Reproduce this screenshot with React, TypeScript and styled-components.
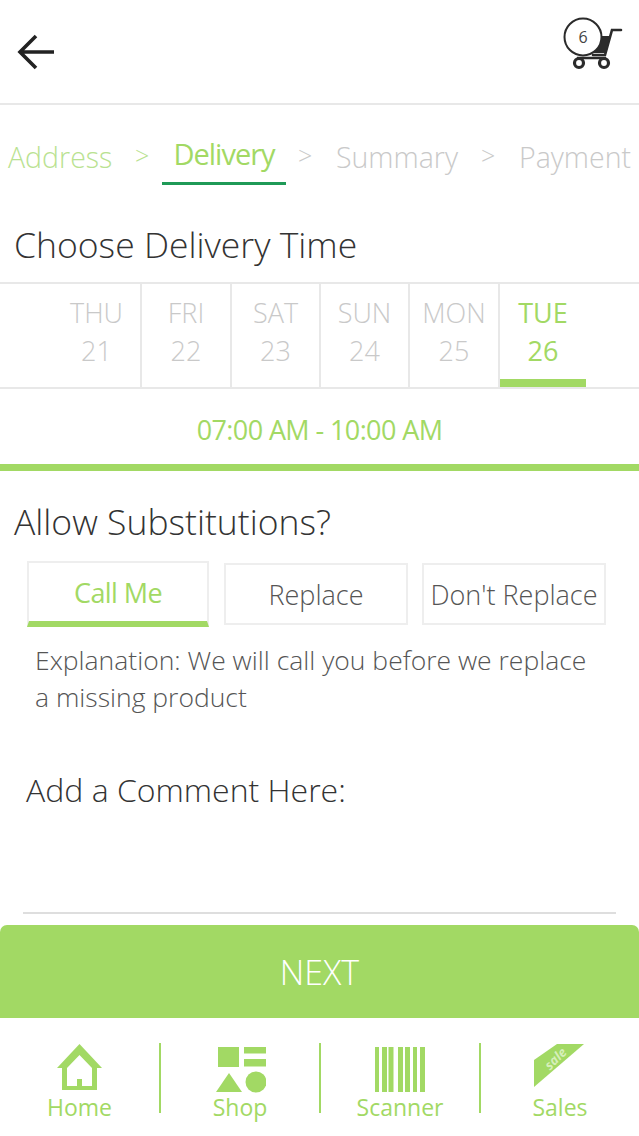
import React from "react";
import styled, { createGlobalStyle } from "styled-components";

const GREEN = "#a2d964";
const GREY = "#c9c9c9";
const LINE = "#e8e8e8";

const Global = createGlobalStyle`
  html, body { margin: 0; padding: 0; background: #fff; }
  * { box-sizing: border-box; }
  body { font-family: "Open Sans", "Liberation Sans", sans-serif; font-weight: 300; }
`;

const Page = styled.div`
  width: 639px;
  height: 1136px;
  display: flex;
  flex-direction: column;
  overflow: hidden;
  background: #fff;
`;
const Header = styled.header`
  height: 105px;
  flex: none;
  border-bottom: 2px solid ${LINE};
  display: flex;
  justify-content: space-between;
  padding: 17px 16px 0 17px;
`;
const BackIcon = styled.svg`
  width: 38px;
  height: 38px;
  margin-top: 16px;
`;
const CartIcon = styled.svg`
  width: 60px;
  height: 54px;
`;
const Steps = styled.nav`
  height: 80px;
  flex: none;
  display: flex;
  align-items: flex-start;
  padding-left: 8px;
  font-size: 28.5px;
  line-height: 40px;
`;
const Step = styled.div<{ $color: string; $w: number; $active?: boolean }>`
  width: ${(p) => p.$w}px;
  flex: none;
  color: ${(p) => p.$color};
  white-space: nowrap;
  margin-top: 32px;
  ${(p) =>
    p.$active &&
    `
    margin-top: 29px;
    height: 51px;
    text-align: center;
    font-size: 29px;
    font-weight: 400;
    letter-spacing: -1px;
    border-bottom: 3px solid #1f9a57;
  `}
`;
const Sep = styled.div<{ $color: string; $w: number; $pl: number }>`
  width: ${(p) => p.$w}px;
  padding-left: ${(p) => p.$pl}px;
  flex: none;
  margin-top: 30px;
  font-size: 25px;
  color: ${(p) => p.$color};
`;
const Title = styled.h2`
  margin: 36px 0 0;
  padding-left: 14px;
  font-weight: 300;
  font-size: 35.5px;
  line-height: 46px;
  color: #333;
  white-space: nowrap;
`;
const DateStrip = styled.div`
  margin-top: 15px;
  height: 107px;
  flex: none;
  border-top: 2px solid ${LINE};
  border-bottom: 2px solid ${LINE};
  display: flex;
  padding-left: 53px;
`;
const DateCell = styled.div<{ $active?: boolean; $w: number }>`
  position: relative;
  width: ${(p) => p.$w}px;
  flex: none;
  border-right: 2px solid ${(p) => (p.$active ? "transparent" : LINE)};
  color: ${(p) => (p.$active ? GREEN : GREY)};
  font-weight: ${(p) => (p.$active ? 400 : 300)};
  text-align: center;
  font-size: 27px;
  line-height: 38px;
  padding-top: 10px;
  ${(p) =>
    p.$active &&
    `
    &::after {
      content: "";
      position: absolute;
      left: 0;
      right: 0;
      bottom: 0;
      height: 8px;
      background: ${GREEN};
    }
  `}
`;
const TimeSlot = styled.div`
  height: 82px;
  flex: none;
  display: flex;
  align-items: center;
  justify-content: center;
  font-size: 27px;
  font-weight: 400;
  letter-spacing: -0.6px;
  color: ${GREEN};
  padding-top: 5px;
  border-bottom: 7px solid ${GREEN};
`;
const SubTitle = styled(Title)`
  margin-top: 27px;
`;
const Choices = styled.div`
  display: flex;
  align-items: center;
  margin-top: 17px;
  padding-left: 27px;
  height: 66px;
  flex: none;
`;
const Choice = styled.div<{ $active?: boolean; $w: number; $mr: number }>`
  width: ${(p) => p.$w}px;
  margin-right: ${(p) => p.$mr}px;
  flex: none;
  height: ${(p) => (p.$active ? 66 : 62)}px;
  display: flex;
  align-items: center;
  justify-content: center;
  border: 2px solid #eeeeee;
  ${(p) => p.$active && `border-bottom: 6px solid ${GREEN};`}
  font-size: 27px;
  font-weight: ${(p) => (p.$active ? 400 : 300)};
  color: ${(p) => (p.$active ? GREEN : "#555")};
  letter-spacing: ${(p) => (p.$active ? "-0.6px" : "0")};
  white-space: nowrap;
`;
const Explain = styled.p`
  margin: 15px 0 0;
  padding-left: 35px;
  font-size: 26.5px;
  line-height: 37px;
  color: #555;
  white-space: nowrap;
`;
const CommentLabel = styled.div`
  margin-top: 53px;
  padding-left: 26px;
  font-size: 32px;
  line-height: 42px;
  color: #333;
`;
const CommentLine = styled.div`
  margin: 101px 23px 0;
  height: 2px;
  flex: none;
  background: #dedede;
`;
const NextButton = styled.button`
  margin-top: 11px;
  height: 93px;
  flex: none;
  width: 100%;
  border: none;
  border-radius: 7px 7px 0 0;
  background: ${GREEN};
  color: #fff;
  font-family: inherit;
  font-weight: 300;
  font-size: 34px;
`;
const BottomNav = styled.footer`
  flex: 1;
  display: grid;
  grid-template-columns: 161px 160px 160px 158px;
  padding-top: 25px;
`;
const NavItem = styled.div<{ $divider?: boolean }>`
  height: 70px;
  display: flex;
  flex-direction: column;
  align-items: center;
  color: ${GREEN};
  font-size: 23px;
  font-weight: 400;
  border-right: ${(p) => (p.$divider ? `2px solid ${GREEN}` : "none")};
`;
const NavIcon = styled.svg`
  width: 52px;
  height: 50px;
  flex: none;
`;
const NavLabel = styled.span`
  line-height: 28px;
`;

const steps = [
  { label: "Address", color: "#b9e291", w: 116 },
  { sep: true, color: "#b9e291", w: 38, pl: 11 },
  { label: "Delivery", color: GREEN, w: 124, active: true },
  { sep: true, color: GREY, w: 50, pl: 12 },
  { label: "Summary", color: GREY, w: 145 },
  { sep: true, color: GREY, w: 38, pl: 0 },
  { label: "Payment", color: GREY, w: 120 },
];

const days = [
  { d: "THU", n: 21, w: 89 },
  { d: "FRI", n: 22, w: 90 },
  { d: "SAT", n: 23, w: 89 },
  { d: "SUN", n: 24, w: 89 },
  { d: "MON", n: 25, w: 90 },
  { d: "TUE", n: 26, w: 88, active: true },
];

const barcode = [
  { x: 1, w: 4 },
  { x: 8, w: 5 },
  { x: 14.5, w: 5 },
  { x: 24, w: 5 },
  { x: 31, w: 5 },
  { x: 39, w: 4 },
  { x: 46, w: 5 },
];

export default function App() {
  return (
    <Page>
      <Global />
      <Header>
        <BackIcon viewBox="0 0 38 38" fill="none" stroke="#222" strokeWidth="3.6">
          <path d="M37 19H4M19 3L3 19l16 16" />
        </BackIcon>
        <CartIcon viewBox="0 0 60 54">
          <path d="M30 38h12l7-25h9" fill="none" stroke="#2b2b2b" strokeWidth="2.6" strokeLinecap="round" />
          <path d="M36 19h11l-5 17H30z" fill="#2b2b2b" />
          <path d="M14 41h29" stroke="#2b2b2b" strokeWidth="2.5" />
          <circle cx="20" cy="20" r="18.5" fill="#fff" stroke="#2b2b2b" strokeWidth="2" />
          <circle cx="16" cy="46" r="4.5" fill="#fff" stroke="#2b2b2b" strokeWidth="3.2" />
          <circle cx="41" cy="46" r="4.5" fill="#fff" stroke="#2b2b2b" strokeWidth="3.2" />
          <text x="20" y="26" textAnchor="middle" fontSize="16" fontWeight="400" fontFamily="Open Sans" fill="#444">6</text>
        </CartIcon>
      </Header>
      <Steps>
        {steps.map((s, i) =>
          s.sep ? (
            <Sep key={i} $color={s.color} $w={s.w} $pl={s.pl ?? 0}>&gt;</Sep>
          ) : (
            <Step key={i} $color={s.color} $w={s.w} $active={s.active}>{s.label}</Step>
          )
        )}
      </Steps>
      <Title>Choose Delivery Time</Title>
      <DateStrip>
        {days.map((d) => (
          <DateCell key={d.d} $active={d.active} $w={d.w}>
            {d.d}
            <br />
            {d.n}
          </DateCell>
        ))}
      </DateStrip>
      <TimeSlot>07:00 AM - 10:00 AM</TimeSlot>
      <SubTitle>Allow Substitutions?</SubTitle>
      <Choices>
        <Choice $active $w={182} $mr={15}>Call Me</Choice>
        <Choice $w={184} $mr={14}>Replace</Choice>
        <Choice $w={184} $mr={0}>Don't Replace</Choice>
      </Choices>
      <Explain>
        Explanation: We will call you before we replace
        <br />
        a missing product
      </Explain>
      <CommentLabel>Add a Comment Here:</CommentLabel>
      <CommentLine />
      <NextButton>NEXT</NextButton>
      <BottomNav>
        <NavItem $divider>
          <NavIcon viewBox="0 0 52 50">
            <path fillRule="evenodd" fill={GREEN} d="M25.5 1L48 25H43V47H8V25H3zM25.5 12L13 25V43H23V36H28V43H38V25z" />
          </NavIcon>
          <NavLabel>Home</NavLabel>
        </NavItem>
        <NavItem $divider>
          <NavIcon viewBox="0 0 52 50" fill={GREEN}>
            <rect x="4" y="4" width="21" height="20" />
            <rect x="30" y="4" width="22" height="6.5" />
            <rect x="30" y="16" width="22" height="7.5" />
            <path d="M15 30L28 49H2z" />
            <circle cx="42" cy="39" r="10.5" />
          </NavIcon>
          <NavLabel>Shop</NavLabel>
        </NavItem>
        <NavItem $divider>
          <NavIcon viewBox="0 0 52 50" fill={GREEN}>
            {barcode.map((b) => (
              <rect key={b.x} x={b.x} y="4" width={b.w} height="45" />
            ))}
          </NavIcon>
          <NavLabel>Scanner</NavLabel>
        </NavItem>
        <NavItem>
          <NavIcon viewBox="0 0 52 50">
            <path fill={GREEN} d="M0 17L23 1H50L0 44z" />
            <text x="22" y="20" textAnchor="middle" fontSize="13" fontStyle="italic" fontWeight="700" fontFamily="Open Sans" fill="#d6efba" transform="rotate(-45 22 16)">sale</text>
          </NavIcon>
          <NavLabel>Sales</NavLabel>
        </NavItem>
      </BottomNav>
    </Page>
  );
}
